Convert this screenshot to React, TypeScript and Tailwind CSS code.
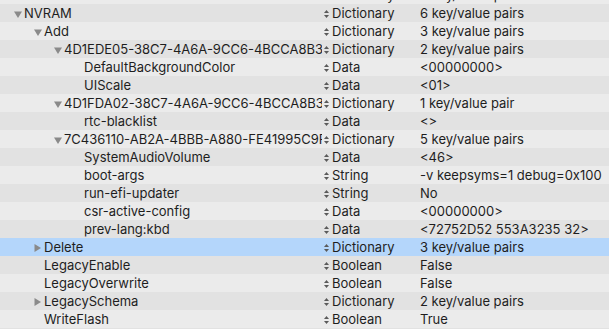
import React from "react";

type Row = {
  key: string;
  level: number;
  toggle?: "open" | "closed";
  type: string;
  value: string;
  selected?: boolean;
};

const rows: Row[] = [
  { key: "Misc", level: 0, toggle: "closed", type: "Dictionary", value: "6 key/value pairs" },
  { key: "NVRAM", level: 0, toggle: "open", type: "Dictionary", value: "6 key/value pairs" },
  { key: "Add", level: 1, toggle: "open", type: "Dictionary", value: "3 key/value pairs" },
  { key: "4D1EDE05-38C7-4A6A-9CC6-4BCCA8B30102", level: 2, toggle: "open", type: "Dictionary", value: "2 key/value pairs" },
  { key: "DefaultBackgroundColor", level: 3, type: "Data", value: "<00000000>" },
  { key: "UIScale", level: 3, type: "Data", value: "<01>" },
  { key: "4D1FDA02-38C7-4A6A-9CC6-4BCCA8B30102", level: 2, toggle: "open", type: "Dictionary", value: "1 key/value pair" },
  { key: "rtc-blacklist", level: 3, type: "Data", value: "<>" },
  { key: "7C436110-AB2A-4BBB-A880-FE41995C9F82", level: 2, toggle: "open", type: "Dictionary", value: "5 key/value pairs" },
  { key: "SystemAudioVolume", level: 3, type: "Data", value: "<46>" },
  { key: "boot-args", level: 3, type: "String", value: "-v keepsyms=1 debug=0x100" },
  { key: "run-efi-updater", level: 3, type: "String", value: "No" },
  { key: "csr-active-config", level: 3, type: "Data", value: "<00000000>" },
  { key: "prev-lang:kbd", level: 3, type: "Data", value: "<72752D52 553A3235 32>" },
  { key: "Delete", level: 1, toggle: "closed", type: "Dictionary", value: "3 key/value pairs", selected: true },
  { key: "LegacyEnable", level: 1, type: "Boolean", value: "False" },
  { key: "LegacyOverwrite", level: 1, type: "Boolean", value: "False" },
  { key: "LegacySchema", level: 1, toggle: "closed", type: "Dictionary", value: "2 key/value pairs" },
  { key: "WriteFlash", level: 1, type: "Boolean", value: "True" },
  { key: "", level: 0, type: "", value: "" },
];

const indent = ["pl-[14px]", "pl-[34px]", "pl-[54px]", "pl-[74px]"];

function Disclosure({ state }: { state?: "open" | "closed" }) {
  if (!state) return <span className="w-[10px] shrink-0" />;
  return (
    <span className="w-[10px] shrink-0 flex items-center">
      {state === "open" ? (
        <svg width="8" height="7" viewBox="0 0 8 7">
          <path d="M0 0.5 H8 L4 7 Z" fill="#8a8a8a" />
        </svg>
      ) : (
        <svg width="7" height="8" viewBox="0 0 7 8">
          <path d="M0.5 0 V8 L7 4 Z" fill="#8a8a8a" />
        </svg>
      )}
    </span>
  );
}

function Stepper() {
  return (
    <svg width="5" height="8" viewBox="0 0 5 8" className="shrink-0">
      <path d="M2.5 0 L5 3 H0 Z" fill="#5a5a5a" />
      <path d="M2.5 8 L5 5 H0 Z" fill="#5a5a5a" />
    </svg>
  );
}

function PlistRow({ row, index }: { row: Row; index: number }) {
  const bg = row.selected
    ? "bg-[#b4d6fb]"
    : index % 2 === 0
      ? "bg-[#ebebeb]"
      : "bg-[#e2e2e2]";
  return (
    <div className={`flex h-[18px] items-center pt-[2px] text-[13px] text-[#1e1e1e] ${bg}`}>
      <div className={`flex w-[322px] shrink-0 items-center overflow-hidden whitespace-nowrap ${indent[row.level]}`}>
        <Disclosure state={row.toggle} />
        <span>{row.key}</span>
      </div>
      <div className="flex w-[98px] shrink-0 items-center gap-[3px] pl-[2px] whitespace-nowrap">
        {row.type && <Stepper />}
        <span>{row.type}</span>
      </div>
      <div className="flex-1 whitespace-nowrap">{row.value}</div>
    </div>
  );
}

export default function App() {
  return (
    <div
      className="h-[329px] w-[609px] overflow-hidden bg-[#ebebeb]"
      style={{ fontFamily: "Inter, 'Liberation Sans', sans-serif" }}
    >
      <div className="-mt-[14px]">
        {rows.map((row, i) => (
          <PlistRow key={i} row={row} index={i} />
        ))}
      </div>
    </div>
  );
}
